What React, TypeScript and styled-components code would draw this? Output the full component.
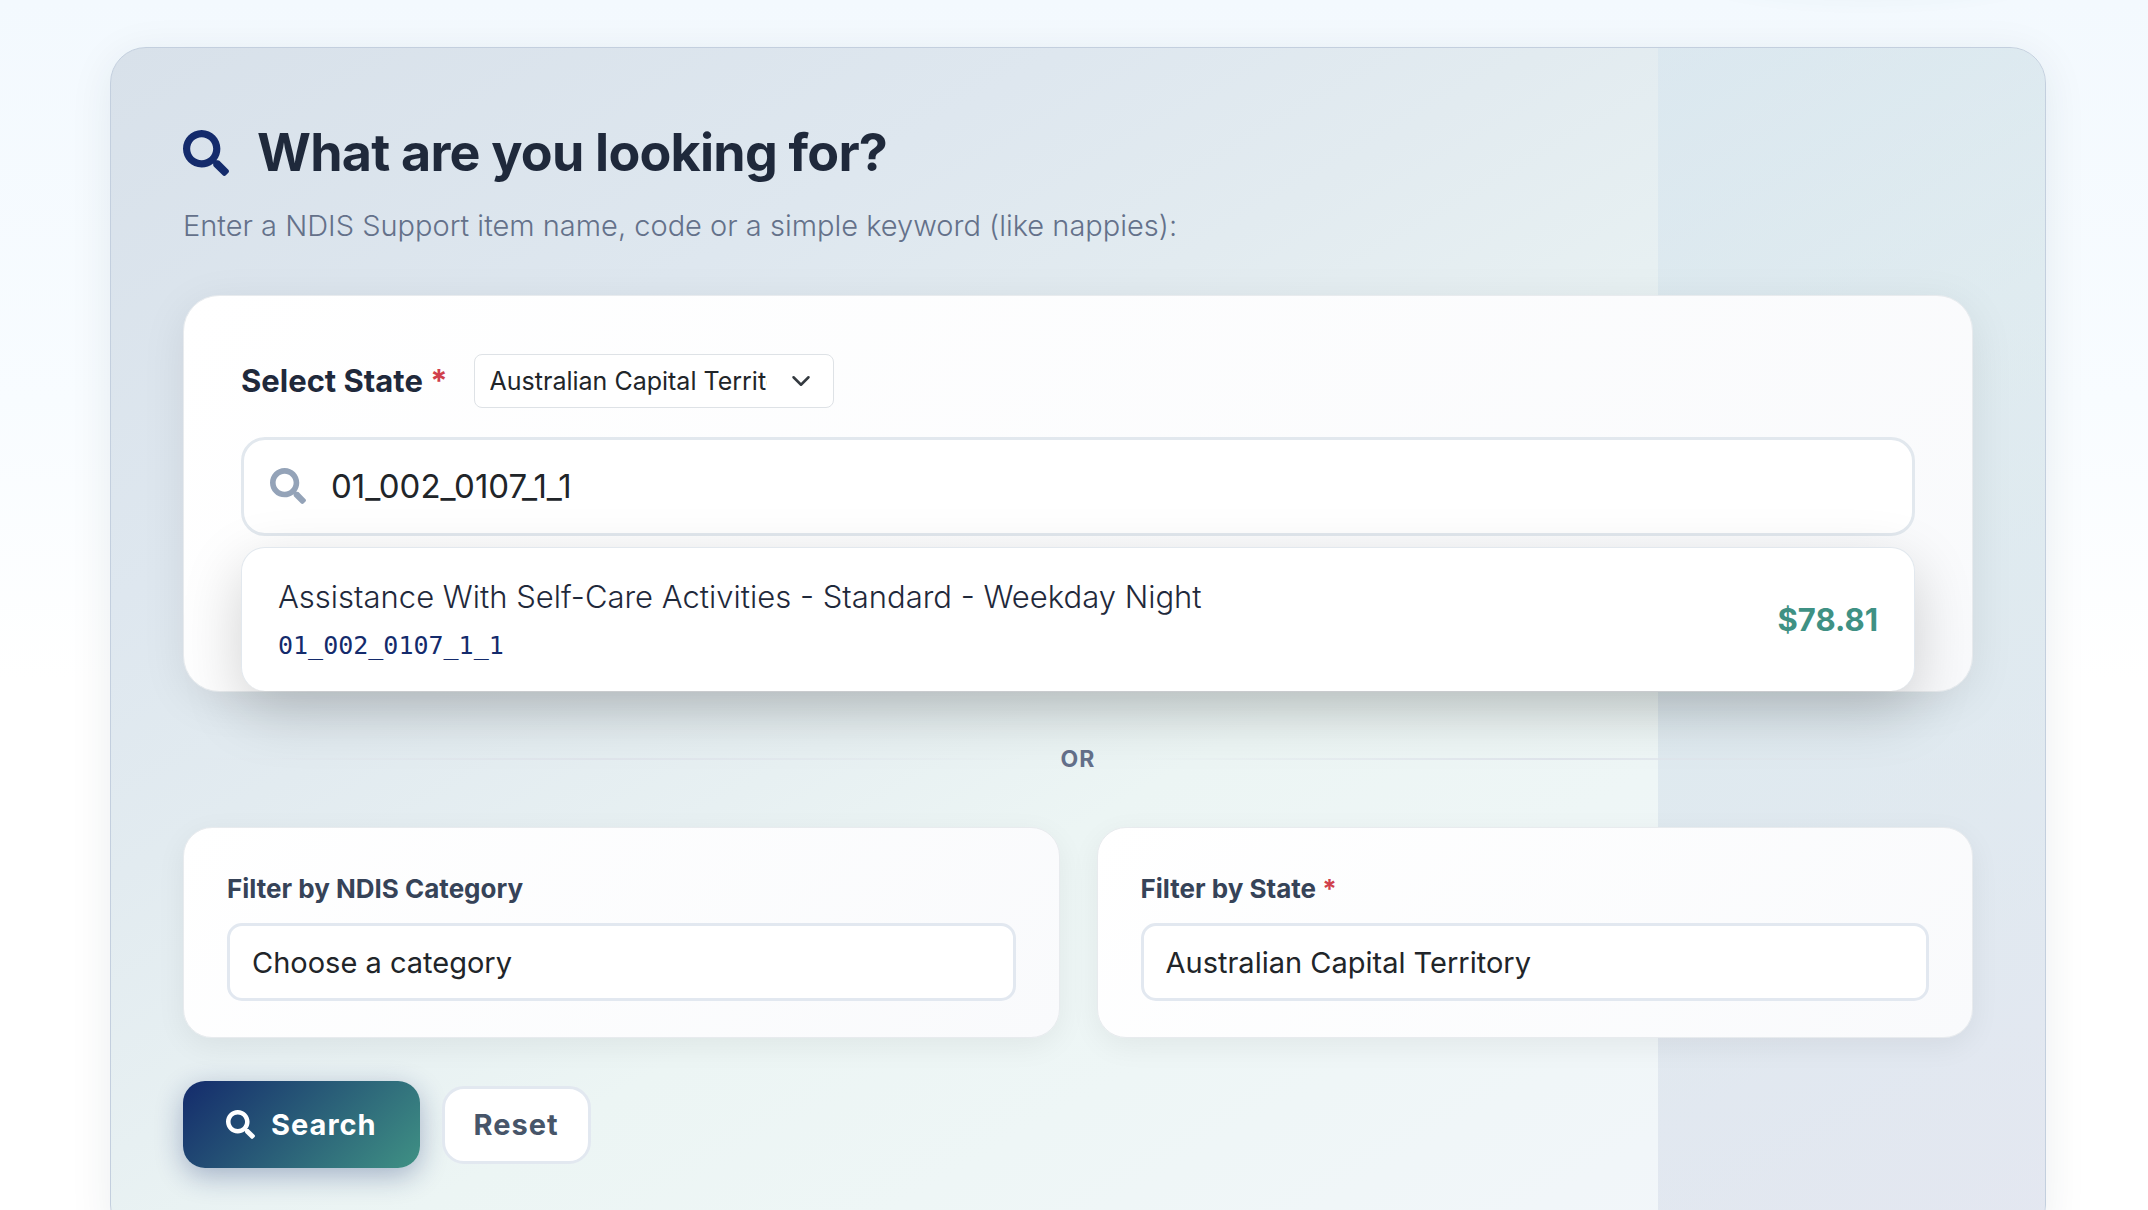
import React, { useState } from 'react';
import styled, { createGlobalStyle } from 'styled-components';
import { FaSearch } from 'react-icons/fa';
import { ChevronDown } from 'lucide-react';

const GlobalStyle = createGlobalStyle`
  *, *::before, *::after { box-sizing: border-box; }
  body {
    margin: 0;
    color: #212529;
    font-family: Inter, 'Liberation Sans', sans-serif;
    background: #ffffff;
  }
  button, input, select { font: inherit; color: inherit; margin: 0; }
`;

const Page = styled.main`
  position: relative;
  height: 100vh;
  overflow: hidden;
  padding: 47px 102px 0 110px;
  background: linear-gradient(180deg, #f3f9fe 0, #f8fcff 400px, #ffffff 680px);
`;

const Glow = styled.div`
  position: absolute;
  top: -60px;
  right: 110px;
  width: 340px;
  height: 60px;
  border-radius: 50%;
  box-shadow: 0 4px 16px rgba(63, 143, 130, 0.03);
`;

const Panel = styled.form`
  position: relative;
  overflow: hidden;
  padding: 72px;
  border: 1px solid #c3cfde;
  border-radius: 36px;
  background: linear-gradient(
    150deg,
    #d8e1ea 0%,
    #dee7ef 24%,
    #e2ebf0 36%,
    #e7f0f2 48%,
    #ecf5f4 58%,
    #eef6f6 70%,
    #f1f6f9 86%,
    #f4f6fb 100%
  );
`;

const PanelShadow = styled.section`
  border-radius: 36px;
  box-shadow: 0 8px 44px rgba(20, 50, 70, 0.08);
`;

const SideTint = styled.div`
  position: absolute;
  inset: 0 0 0 80%;
  background: linear-gradient(
    165deg,
    rgba(208, 226, 238, 0.42) 0%,
    rgba(208, 222, 233, 0.5) 50%,
    rgba(211, 216, 230, 0.5) 100%
  );
`;

const Content = styled.div`
  position: relative;
`;

const Title = styled.h2`
  display: flex;
  align-items: center;
  gap: 28px;
  margin: 0 0 18px;
  color: #1f293b;
  font-size: 52px;
  font-weight: 700;
  line-height: 66px;
  letter-spacing: -0.015em;

  svg { width: 46px; height: 46px; color: #142b6c; }
`;

const Lead = styled.p`
  margin: 0 0 47px;
  color: #64718a;
  font-size: 29px;
  font-weight: 300;
  line-height: 44px;
`;

const Card = styled.div`
  border: 1px solid #e8ebee;
  background: linear-gradient(135deg, #ffffff 0%, #f9fafc 100%);
`;

const SearchCard = styled(Card)`
  padding: 58px 57px 0;
  border-radius: 36px;
  box-shadow: 0 10px 45px rgba(0, 0, 0, 0.08);
`;

const StateRow = styled.div`
  display: flex;
  align-items: center;
  gap: 26px;
  margin-bottom: 29px;
`;

const StateLabel = styled.label`
  color: #1f293b;
  font-size: 31px;
  font-weight: 700;
  line-height: 46px;
`;

const Required = styled.span`
  color: #d0404c;
`;

const CompactSelectBox = styled.div`
  position: relative;
  width: 360px;

  svg {
    position: absolute;
    right: 18px;
    top: 12px;
    width: 30px;
    height: 30px;
    color: #343a40;
    pointer-events: none;
  }
`;

const CompactSelect = styled.select`
  display: block;
  appearance: none;
  width: 100%;
  height: 54px;
  padding: 0 66px 0 15px;
  border: 1px solid #dee2e6;
  border-radius: 8px;
  background: #ffffff;
  font-size: 25px;
`;

const SearchField = styled.div`
  display: flex;
  align-items: center;
  gap: 25px;
  height: 99px;
  padding: 0 26px 2px;
  border: 3px solid #e2e8ee;
  border-radius: 24px;
  background: #ffffff;

  svg { flex: none; width: 36px; height: 36px; color: #94a3b8; }
`;

const SearchInput = styled.input`
  flex: 1;
  min-width: 0;
  padding: 0;
  border: 0;
  outline: 0;
  background: transparent;
  font-size: 33px;
  line-height: 40px;
`;

const Suggestions = styled.ul`
  position: relative;
  margin: 11px 0 0;
  padding: 0;
  list-style: none;
  border: 1px solid #e2e8ee;
  border-bottom: 0;
  border-radius: 24px;
  background: #ffffff;
  box-shadow: 0 20px 60px rgba(0, 0, 0, 0.18);
`;

const Suggestion = styled.li`
  display: flex;
  align-items: center;
  justify-content: space-between;
  padding: 26px 36px 27px;
`;

const ItemName = styled.div`
  margin-bottom: 8px;
  color: #1f293b;
  font-size: 31px;
  font-weight: 300;
  line-height: 46px;
`;

const ItemCode = styled.div`
  color: #142b6c;
  font-family: 'DejaVu Sans Mono', monospace;
  font-size: 25px;
  line-height: 36px;
`;

const Price = styled.strong`
  color: #3f9184;
  font-size: 31px;
  font-weight: 700;
`;

const Divider = styled.div`
  display: flex;
  align-items: center;
  gap: 36px;
  margin: 49px 0 50px;
  color: #64708a;
  font-size: 23px;
  font-weight: 700;
  line-height: 36px;
  letter-spacing: 1px;

  &::before, &::after {
    content: '';
    flex: 1;
    height: 2px;
    background: linear-gradient(90deg, transparent, #e0e5ec, transparent);
  }
`;

const Filters = styled.div`
  display: grid;
  grid-template-columns: 1fr 1fr;
  gap: 37px;
  margin-bottom: 43px;
`;

const FilterCard = styled(Card)`
  padding: 38px 43px 36px;
  border-radius: 29px;
  box-shadow: 0 8px 30px rgba(0, 0, 0, 0.06);
`;

const FilterLabel = styled.label`
  display: block;
  margin-bottom: 11px;
  color: #364358;
  font-size: 26px;
  font-weight: 700;
  line-height: 46px;
`;

const FilterSelect = styled.select`
  display: block;
  appearance: none;
  width: 100%;
  height: 78px;
  padding: 0 22px;
  border: 3px solid #e2e8f0;
  border-radius: 15px;
  background: #ffffff;
  font-size: 29px;
`;

const Actions = styled.div`
  display: flex;
  align-items: center;
  gap: 22px;
`;

const Button = styled.button`
  display: flex;
  align-items: center;
  border-radius: 22px;
  font-size: 29px;
  font-weight: 700;
  letter-spacing: 1px;
  cursor: pointer;
`;

const SearchButton = styled(Button)`
  gap: 16px;
  height: 87px;
  padding: 0 43px;
  border: 0;
  color: #ffffff;
  background: linear-gradient(135deg, #142b6c 0%, #3f9184 100%);
  box-shadow: 0 8px 28px rgba(20, 43, 108, 0.32);

  svg { width: 29px; height: 29px; }
`;

const ResetButton = styled(Button)`
  height: 78px;
  padding: 0 29px;
  border: 3px solid #e2e8f0;
  color: #475569;
  background: #ffffff;
`;

const states = [
  'Australian Capital Territory',
  'New South Wales',
  'Northern Territory',
  'Queensland',
  'South Australia',
  'Tasmania',
  'Victoria',
  'Western Australia',
];

const suggestions = [
  {
    name: 'Assistance With Self-Care Activities - Standard - Weekday Night',
    code: '01_002_0107_1_1',
    price: '$78.81',
  },
];

const StateOptions = () => (
  <>
    {states.map((name) => (
      <option key={name}>{name}</option>
    ))}
  </>
);

export default function App() {
  const [query, setQuery] = useState('01_002_0107_1_1');
  const [region, setRegion] = useState(states[0]);

  return (
    <>
      <GlobalStyle />
      <Page>
        <Glow />
        <PanelShadow>
          <Panel onSubmit={(e) => e.preventDefault()}>
            <SideTint />
            <Content>
              <Title>
                <FaSearch aria-hidden />
                What are you looking for?
              </Title>
              <Lead>Enter a NDIS Support item name, code or a simple keyword (like nappies):</Lead>

              <SearchCard>
                <StateRow>
                  <StateLabel htmlFor="state">
                    Select State <Required>*</Required>
                  </StateLabel>
                  <CompactSelectBox>
                    <CompactSelect id="state" value={region} onChange={(e) => setRegion(e.target.value)}>
                      {StateOptions()}
                    </CompactSelect>
                    <ChevronDown aria-hidden />
                  </CompactSelectBox>
                </StateRow>
                <SearchField>
                  <FaSearch aria-hidden />
                  <SearchInput
                    type="text"
                    aria-label="Support item"
                    value={query}
                    onChange={(e) => setQuery(e.target.value)}
                  />
                </SearchField>
                <Suggestions>
                  {suggestions.map((item) => (
                    <Suggestion key={item.code}>
                      <div>
                        <ItemName>{item.name}</ItemName>
                        <ItemCode>{item.code}</ItemCode>
                      </div>
                      <Price>{item.price}</Price>
                    </Suggestion>
                  ))}
                </Suggestions>
              </SearchCard>

              <Divider>OR</Divider>

              <Filters>
                <FilterCard>
                  <FilterLabel htmlFor="category">Filter by NDIS Category</FilterLabel>
                  <FilterSelect id="category">
                    <option>Choose a category</option>
                  </FilterSelect>
                </FilterCard>
                <FilterCard>
                  <FilterLabel htmlFor="filter-state">
                    Filter by State <Required>*</Required>
                  </FilterLabel>
                  <FilterSelect id="filter-state" value={region} onChange={(e) => setRegion(e.target.value)}>
                    {StateOptions()}
                  </FilterSelect>
                </FilterCard>
              </Filters>

              <Actions>
                <SearchButton type="submit">
                  <FaSearch aria-hidden />
                  Search
                </SearchButton>
                <ResetButton type="reset">Reset</ResetButton>
              </Actions>
            </Content>
          </Panel>
        </PanelShadow>
      </Page>
    </>
  );
}
